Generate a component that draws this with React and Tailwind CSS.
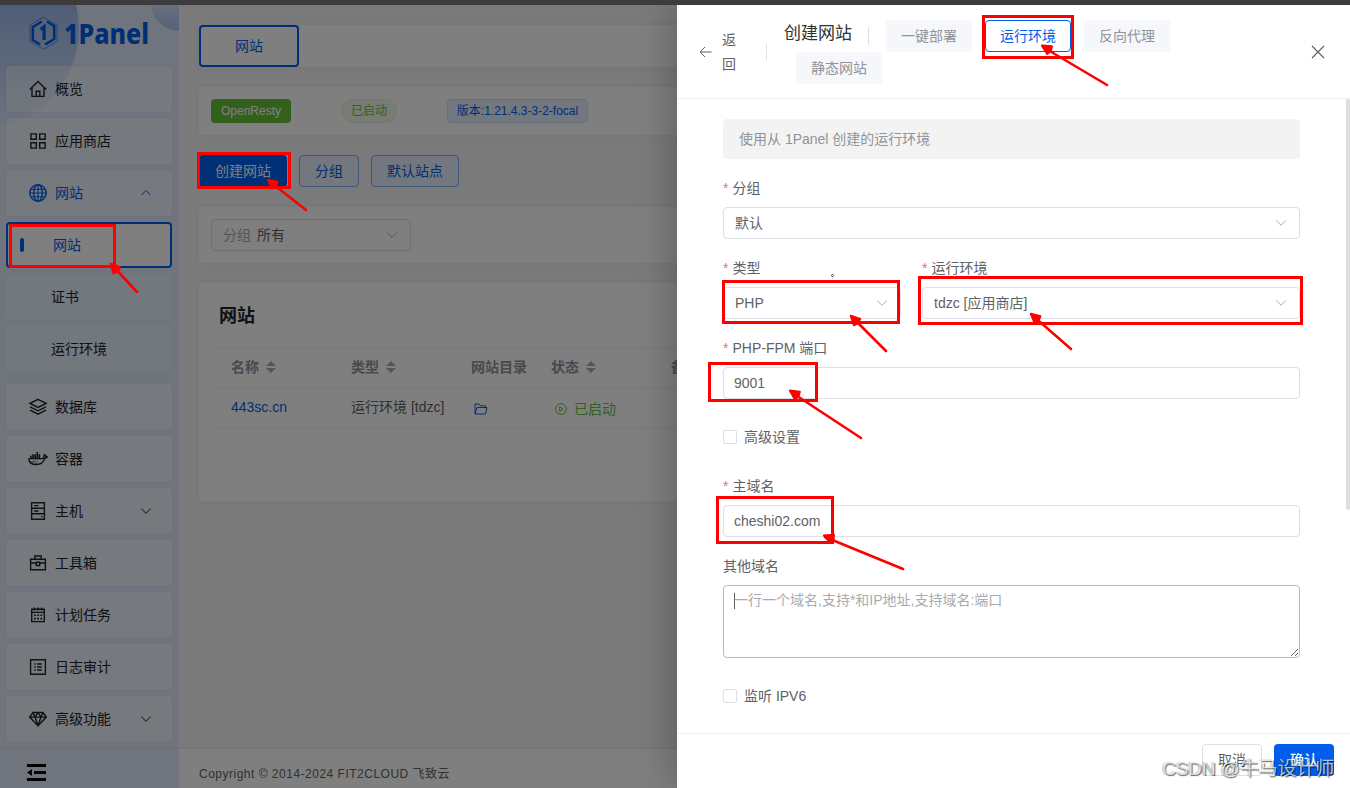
import React, { useState } from 'react';

const FONT = "font-['Liberation_Sans','Noto_Sans_CJK_SC',sans-serif]";

function Icon({ size = 18, children, className = '' }) {
  return (
    <svg
      width={size}
      height={size}
      viewBox="0 0 18 18"
      fill="none"
      stroke="currentColor"
      strokeWidth="1.4"
      className={`shrink-0 ${className}`}
    >
      {children}
    </svg>
  );
}

const icons = {
  home: (
    <Icon>
      <path d="M.8 9.6 9 1.6l8.2 8M3 8v8.4h12V8M7.2 16.2v-5h3.6v5" />
    </Icon>
  ),
  apps: (
    <Icon>
      <path d="M1.900 1.900h5.400v5.400H1.900zM10.700 1.900h5.400v5.400h-5.400zM1.900 10.700h5.400v5.400H1.900zM10.700 10.700h5.400v5.400h-5.400z" />
    </Icon>
  ),
  globe: (
    <Icon>
      <circle cx="9" cy="9" r="8.2" />
      <ellipse cx="9" cy="9" rx="4.3" ry="8.2" />
      <path d="M9 .8v16.4M.8 9h16.4M2 5.2h14M2 12.8h14" strokeWidth="1.1" />
    </Icon>
  ),
  database: (
    <Icon>
      <path d="m9 1.4 8 4-8 4-8-4zM1 8.800l8 4 8-4M1 12.100l8 4 8-4" />
    </Icon>
  ),
  docker: (
    <Icon size={20} className="-mx-px">
      <path d="M.8 8.600h11.900c1.200 0 1.700-.7 1.600-1.700-.1-.7.1-1.400.7-1.900.7.5.9 1.100.9 1.800.5-.1 1.100 0 1.500.3-.5.9-1.300 1.200-2.300 1.200-1.200 3.800-3.700 5.700-7.700 5.700C3.400 14 .6 12.300.8 8.600z" strokeWidth="1.200" />
      <path d="M2.600 6v2.400M4.500 4.800v3.600M6.400 4.800v3.600M8.300 2.600v5.800M10.200 4.800v3.600" strokeWidth="1.500" />
      <path d="M2 11.600c2.200.4 3.800 0 5-1M6 13.600c1.300-.4 2-.9 2.600-1.700" strokeWidth=".8" />
    </Icon>
  ),
  host: (
    <Icon>
      <path d="M2.600.7h12.800v16.600H2.600zM2.600 6.300h12.800M2.600 11.800h12.800M5.200 3.600h4.300M5.200 9h4.300M12 14.600h1.600" />
    </Icon>
  ),
  toolbox: (
    <Icon>
      <path d="M1.600 5.200h14.800v10.600H1.600zM5.800 5V2h6.400v3M1.600 9h5.600M10.800 9h5.600M7.300 8.300h3.400v3.200H7.300z" />
    </Icon>
  ),
  calendar: (
    <Icon>
      <path d="M2.700 3.200h12.600v12.400H2.700zM2.700 6.400h12.600M5.400 1.400v3M9 1.400v3M12.600 1.400v3" />
      <path d="M5 9.300h8.500M5 12.600h8.500" strokeWidth="1.600" strokeDasharray="1.800 1.400" />
    </Icon>
  ),
  log: (
    <Icon>
      <path d="M1.600 1.800h14.800v14.400H1.600zM8 6h4.800M8 9h4.800M8 12h4.800" />
      <path d="M5.200 6h1.500M5.200 9h1.500M5.200 12h1.500" />
    </Icon>
  ),
  diamond: (
    <Icon>
      <path d="M4 2.500h10l3.300 4.600L9 15.700.7 7.100zM.7 7.100h16.600M4 2.500l2 4.600 3 8.400 3-8.400 2-4.600M6 7.100l3-4.400 3 4.400" />
    </Icon>
  ),
};

function Chevron({ up = false, className = '' }) {
  return (
    <svg width="12" height="12" viewBox="0 0 12 12" fill="none" stroke="currentColor" className={`shrink-0 ${className}`}>
      <path d={up ? 'M1.500 8 6 3.500 10.500 8' : 'M1.200 3.500 6 8.300l4.800-4.800'} />
    </svg>
  );
}

function Logo() {
  return (
    <div className="flex items-start">
      <svg width="31" height="36" viewBox="0 0 31 34" className="shrink-0" fill="none" stroke="#005eeb">
        <path d="M15.500 1 29 9v16.500l-13.500 7.700L2 25.500V9z" strokeWidth=".8" opacity=".7" />
        <path d="M19 5.500 26.200 10v13l-9 5.500M12 28.500 4.800 24V11l9-5.500" strokeWidth="2.600" />
        <path d="m12.500 13.500 3.600-2.800V24" strokeWidth="3.200" />
      </svg>
      <svg width="90" height="46" viewBox="0 0 90 46" className="ml-1">
        <text
          x="1"
          y="29"
          textLength="85"
          lengthAdjust="spacingAndGlyphs"
          className="fill-[#005eeb] font-['Noto_Sans',sans-serif] text-[29px] font-extrabold"
        >
          1Panel
        </text>
      </svg>
    </div>
  );
}

const menu = [
  { label: '概览', icon: 'home' },
  { label: '应用商店', icon: 'apps' },
  { label: '网站', icon: 'globe', active: true, arrow: 'up' },
  { label: '网站', sub: true, selected: true },
  { label: '证书', sub: true },
  { label: '运行环境', sub: true, last: true },
  { label: '数据库', icon: 'database' },
  { label: '容器', icon: 'docker' },
  { label: '主机', icon: 'host', arrow: 'down' },
  { label: '工具箱', icon: 'toolbox' },
  { label: '计划任务', icon: 'calendar' },
  { label: '日志审计', icon: 'log' },
  { label: '高级功能', icon: 'diamond', arrow: 'down' },
];

function MenuItem({ item }) {
  if (item.selected) {
    return (
      <div className="flex h-[46px] items-center rounded-[4px] border-2 border-[#005eeb] bg-white pl-3 text-[#005eeb]">
        <span className="h-[14px] w-1 rounded-sm bg-[#005eeb]" />
        <span className="ml-[29px]">{item.label}</span>
      </div>
    );
  }
  if (item.sub) {
    return (
      <div className={`flex h-[46px] items-center rounded-[4px] bg-white/25 pl-[45px] ${item.last ? 'mb-[6px]' : ''}`}>
        {item.label}
      </div>
    );
  }
  return (
    <div
      className={`flex h-[46px] items-center rounded-[4px] bg-white/40 pl-[23px] pr-5 shadow-[0_0_3px_rgba(0,94,235,0.08)] ${
        item.active ? 'text-[#005eeb]' : ''
      }`}
    >
      {icons[item.icon]}
      <span className="ml-2 flex-1">{item.label}</span>
      {item.arrow && <Chevron up={item.arrow === 'up'} />}
    </div>
  );
}

function Sidebar() {
  return (
    <aside className="relative flex w-[179px] flex-col overflow-hidden bg-[#dfe9fb] text-sm text-[#1f2329]">
      {/* soft circles behind the logo */}
      <div className="absolute -top-[76px] left-[-121px] size-[200px] rounded-full bg-linear-to-b from-[#9db9ee] from-35% to-[#d9e6fb]/60" />
      <div className="absolute -top-[30px] left-[151px] size-14 rounded-full bg-linear-to-b from-[#dbe7fb] from-40% to-[#a8c3f2]" />
      <div className="relative h-[61px] pl-7 pt-[10px]">
        <Logo />
      </div>
      <nav className="relative flex flex-1 flex-col gap-[6px] pl-[6px] pr-[7px]">
        {menu.map((item, i) => (
          <MenuItem key={i} item={item} />
        ))}
      </nav>
      <div className="relative flex h-10 items-center border-t border-[#d2d8e2] pl-[27px] pt-2 text-black">
        <svg width="19" height="17" viewBox="0 0 19 17" fill="currentColor">
          <path d="M0 0h19v3H0zM7 7h12v3H7zM0 14h19v3H0zM0 8.500 5 5v7z" />
        </svg>
      </div>
    </aside>
  );
}

function SortCaret() {
  return (
    <svg width="10" height="12" viewBox="0 0 10 12" fill="#a8abb2" className="ml-[7px]">
      <path d="M5 0 10 5H0zM5 12 0 7h10z" />
    </svg>
  );
}

function WebsitePage() {
  const card = 'shrink-0 rounded-[4px] bg-white shadow-[0_0_6px_rgba(0,94,235,0.06)]';
  return (
    <div className="flex flex-1 flex-col bg-[#f4f4f4]">
      <div className="flex flex-1 flex-col gap-5 px-5 pt-5 text-sm">
        <div className={`${card} h-[42px]`}>
          <div className="flex h-[42px] w-[100px] items-center justify-center rounded-[4px] border-2 border-[#005eeb] bg-white text-[#005eeb]">
            网站
          </div>
        </div>

        <div className={`${card} flex h-12 items-center px-3 text-xs`}>
          <span className="flex h-6 w-20 items-center justify-center rounded-[4px] bg-[#67c23a] text-white">OpenResty</span>
          <span className="ml-[50px] flex h-6 w-14 items-center justify-center rounded-full border border-[#e1f3d8] bg-[#f0f9eb] text-[#67c23a]">
            已启动
          </span>
          <span className="ml-[50px] flex h-6 w-[141px] items-center justify-center rounded-[4px] border border-[#ccdffb] bg-[#e6effd] text-[#005eeb]">
            版本:1.21.4.3-3-2-focal
          </span>
        </div>

        <div className="flex h-8 shrink-0 gap-3">
          <button className="w-[88px] rounded-[4px] bg-[#005eeb] text-white">创建网站</button>
          <button className="w-[60px] rounded-[4px] border border-[#80aef5] bg-[#e6effd] text-[#005eeb]">分组</button>
          <button className="w-[88px] rounded-[4px] border border-[#80aef5] bg-[#e6effd] text-[#005eeb]">默认站点</button>
        </div>

        <div className={`${card} h-14 p-3`}>
          <div className="flex h-8 w-[200px] items-center rounded-[4px] border border-[#dcdfe6] px-[11px] text-[#606266]">
            <span className="mr-[6px] text-[#a8abb2]">分组</span>
            <span className="flex-1">所有</span>
            <Chevron className="mr-px text-[#a8abb2]" />
          </div>
        </div>

        <div className={`${card} h-[218px] px-5 pt-[18px]`}>
          <h2 className="h-[46px] text-lg leading-[30px] font-bold text-[#1f2329]">网站</h2>
          <div className="border-t border-[#ebeef5] text-[#606266]">
            <div className="flex h-10 items-center border-b border-[#ebeef5] pb-[2px] pl-3 font-bold text-[#909399]">
              <span className="flex w-[120px] items-center">名称<SortCaret /></span>
              <span className="flex w-[120px] items-center">类型<SortCaret /></span>
              <span className="w-20">网站目录</span>
              <span className="flex w-[120px] items-center">状态<SortCaret /></span>
              <span>备注</span>
            </div>
            <div className="flex h-[41px] items-center border-b border-[#ebeef5] pb-[2px] pl-3">
              <span className="w-[120px] text-[#005eeb]">443sc.cn</span>
              <span className="w-[120px]">运行环境 [tdzc]</span>
              <span className="w-20 pl-[3px] text-[#005eeb]">
                <svg width="14" height="14" viewBox="0 0 14 14" fill="none" stroke="currentColor" className="mt-1">
                  <path d="M1 12V2h4l1.500 1.800h5V5.500M1 12l2-6.500h10L11.500 12z" />
                </svg>
              </span>
              <span className="flex items-center gap-[7px] pl-1 pt-[3px] text-[#67c23a]">
                <svg width="12" height="12" viewBox="0 0 12 12" fill="none" stroke="currentColor">
                  <circle cx="6" cy="6" r="5.400" />
                  <path d="M4.700 3.700v4.600L8.200 6z" />
                </svg>
                已启动
              </span>
            </div>
          </div>
        </div>
      </div>
      <footer className="flex h-10 shrink-0 items-center border-t border-[#e4e7ed] bg-white pl-5 pt-[10px] text-xs tracking-[0.5px] text-[#606266]">
        Copyright © 2014-2024 FIT2CLOUD 飞致云
      </footer>
    </div>
  );
}

function Label({ required, children }) {
  return (
    <div className="mb-2 flex h-[22px] items-center text-sm text-[#606266]">
      {required && <span className="mr-1 text-[#f56c6c]">*</span>}
      {children}
    </div>
  );
}

function Select({ value }) {
  return (
    <div className="flex h-8 items-center justify-between rounded-[4px] border border-[#dcdfe6] px-[11px] text-sm text-[#606266]">
      {value}
      <Chevron className="mr-px text-[#a8abb2]" />
    </div>
  );
}

function Input({ value, onChange }) {
  return (
    <input
      value={value}
      onChange={(e) => onChange(e.target.value)}
      className="block h-8 w-full rounded-[4px] border border-[#dcdfe6] px-[10px] text-sm text-[#606266] outline-none"
    />
  );
}

function Checkbox({ label }) {
  return (
    <div className="flex h-8 items-center text-sm text-[#606266]">
      <span className="mr-[7px] size-[14px] rounded-[2px] border border-[#dcdfe6] bg-white" />
      {label}
    </div>
  );
}

function TypeButton({ active, children }) {
  return (
    <button
      className={`h-8 w-[86px] rounded-[4px] text-sm ${
        active ? 'border border-[#005eeb] bg-white text-[#005eeb]' : 'bg-[#f5f7fa] text-[#909399]'
      }`}
    >
      {children}
    </button>
  );
}

function CreateDrawer() {
  const [port, setPort] = useState('9001');
  const [domain, setDomain] = useState('cheshi02.com');

  return (
    <div className="absolute bottom-0 right-0 top-0 flex w-[673px] flex-col bg-white shadow-[-8px_0_32px_rgba(0,0,0,0.2)]">
      <header className="flex h-[94px] shrink-0 border-b border-[#f0f0f0] pl-[22px] pr-[25px]">
        <div className="flex items-center text-sm leading-6 text-[#606266]">
          <svg width="13" height="12" viewBox="0 0 13 12" fill="none" stroke="currentColor">
            <path d="M12.500 6H1M6 1 1 6l5 5" />
          </svg>
          <span className="ml-[10px] w-[14px]">返回</span>
          <span className="ml-[30px] h-4 w-px bg-[#dcdfe6]" />
        </div>
        <div className="ml-[17px] flex-1 pt-[15px]">
          <div className="flex">
            <span className="h-8 text-[17px] leading-[28px] text-[#303133]">创建网站</span>
            <span className="ml-4 mr-[17px] mt-[7px] h-[18px] w-px bg-[#dcdfe6]" />
            <div className="flex gap-[13px]">
              <TypeButton>一键部署</TypeButton>
              <TypeButton active>运行环境</TypeButton>
              <TypeButton>反向代理</TypeButton>
            </div>
          </div>
          <div className="pl-3">
            <TypeButton>静态网站</TypeButton>
          </div>
        </div>
        <svg width="14" height="14" viewBox="0 0 14 14" fill="none" stroke="#606266" strokeWidth="1.200" className="self-center">
          <path d="m1 1 12 12M13 1 1 13" />
        </svg>
      </header>

      <div className="flex flex-1 overflow-hidden">
        <div className="flex-1 pl-[46px] pr-[46px] pt-5">
          <div className="mb-[18px] flex h-10 items-center rounded-[4px] bg-[#f3f3f3] px-4 text-sm text-[#909399]">
            使用从 1Panel 创建的运行环境
          </div>
          <div className="mb-[18px]">
            <Label required>分组</Label>
            <Select value="默认" />
          </div>
          <div className="mb-[18px] flex gap-[21px]">
            <div className="w-[178px]">
              <Label required>类型</Label>
              <Select value="PHP" />
            </div>
            <div className="flex-1">
              <Label required>运行环境</Label>
              <Select value="tdzc [应用商店]" />
            </div>
          </div>
          <div className="mb-[22px]">
            <Label required>PHP-FPM 端口</Label>
            <Input value={port} onChange={setPort} />
          </div>
          <Checkbox label="高级设置" />
          <div className="mb-[18px] mt-[22px]">
            <Label required>主域名</Label>
            <Input value={domain} onChange={setDomain} />
          </div>
          <div className="mb-[22px]">
            <Label>其他域名</Label>
            <div className="relative h-[73px]">
              <textarea
                placeholder="一行一个域名,支持*和IP地址,支持域名:端口"
                className="block h-[73px] w-full resize-y rounded-[4px] border border-[#a3bfec] px-[10px] py-1 text-sm leading-[21px] outline-none placeholder:text-[#a8abb2]"
              />
              <span className="absolute left-[11px] top-2 h-4 w-px bg-[#606266]" />
            </div>
          </div>
          <Checkbox label="监听 IPV6" />
        </div>
        <div className="h-[411px] w-1 rounded-full bg-[#dddee0]" />
      </div>

      <footer className="flex h-[55px] shrink-0 justify-end gap-3 border-t border-[#f0f0f0] pr-4 pt-[10px] text-sm">
        <button className="h-8 w-[60px] rounded-[4px] border border-[#dcdfe6] text-[#606266]">取消</button>
        <button className="h-8 w-[60px] rounded-[4px] bg-[#005eeb] font-medium text-white">确认</button>
      </footer>
    </div>
  );
}

// x, y, width, height measured on the centre of the stroke
const boxes = [
  [10.5, 225.5, 104, 41],
  [198.5, 153.5, 91, 34],
  [983.5, 16.5, 89, 41],
  [723.5, 281.5, 175, 41],
  [919.5, 277.5, 382, 46],
  [709.5, 363.5, 107, 37],
  [717.5, 497.5, 115, 45],
];

// tip x, tip y, tail x, tail y
const arrows = [
  [110, 263, 137, 292],
  [267, 179, 306, 210],
  [1041, 45, 1107, 85],
  [850, 315, 886, 351],
  [1030, 313, 1071, 349],
  [789, 390, 861, 438],
  [823, 535, 903, 569],
];

function Annotations() {
  return (
    <svg width="1350" height="788" className="pointer-events-none absolute left-0 top-0" stroke="#fe0000" fill="none">
      {boxes.map(([x, y, w, h]) => (
        <rect key={`${x}-${y}`} x={x} y={y} width={w} height={h} strokeWidth="3" />
      ))}
      {arrows.map(([x1, y1, x2, y2]) => {
        const angle = (Math.atan2(y2 - y1, x2 - x1) * 180) / Math.PI;
        return (
          <g key={`${x1}-${y1}`}>
            <path d={`M${x1 + 2} ${y1 + 2}L${x2} ${y2}`} strokeWidth="2.6" strokeLinecap="round" />
            <path
              d="M1 0 10-4.500 11.500 0 10 4.500z"
              transform={`translate(${x1} ${y1}) rotate(${angle})`}
              fill="#fe0000"
              strokeWidth="2"
              strokeLinejoin="round"
            />
          </g>
        );
      })}
      <circle cx="832.5" cy="275.5" r="1" stroke="#222" strokeWidth=".8" />
    </svg>
  );
}

export default function App() {
  return (
    <div className={`relative flex h-[788px] w-[1350px] flex-col overflow-hidden ${FONT}`}>
      <div className="h-[5px] shrink-0 bg-[#3c3c3c]" />
      <div className="relative flex flex-1 overflow-hidden">
        <Sidebar />
        <WebsitePage />
        <div className="absolute inset-0 bg-black/50" />
        <CreateDrawer />
      </div>
      <Annotations />
      <div className="absolute bottom-[5px] right-4 whitespace-nowrap text-[19px] leading-7 tracking-[-0.15px] text-white/70 [text-shadow:1px_1px_1px_rgba(0,0,0,0.6),-1px_0_1px_rgba(0,0,0,0.25)]">
        CSDN @牛马设计师
      </div>
    </div>
  );
}
